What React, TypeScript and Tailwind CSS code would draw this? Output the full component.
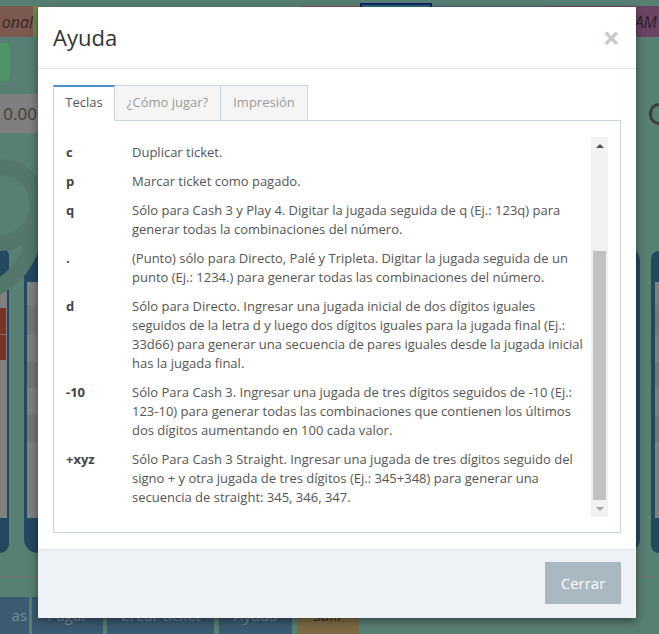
import React from "react";

// Help rows shown in the "Teclas" tab
const rows: { key: string; text: string }[] = [
    { key: "c", text: "Duplicar ticket." },
    { key: "p", text: "Marcar ticket como pagado." },
    { key: "q", text: "Sólo para Cash 3 y Play 4. Digitar la jugada seguida de q (Ej.: 123q) para generar todas la combinaciones del número." },
    { key: ".", text: "(Punto) sólo para Directo, Palé y Tripleta. Digitar la jugada seguida de un punto (Ej.: 1234.) para generar todas las combinaciones del número." },
    { key: "d", text: "Sólo para Directo. Ingresar una jugada inicial de dos dígitos iguales seguidos de la letra d y luego dos dígitos iguales para la jugada final (Ej.: 33d66) para generar una secuencia de pares iguales desde la jugada inicial has la jugada final." },
    { key: "-10", text: "Sólo Para Cash 3. Ingresar una jugada de tres dígitos seguidos de -10 (Ej.: 123-10) para generar todas las combinaciones que contienen los últimos dos dígitos aumentando en 100 cada valor." },
    { key: "+xyz", text: "Sólo Para Cash 3 Straight. Ingresar una jugada de tres dígitos seguido del signo + y otra jugada de tres dígitos (Ej.: 345+348) para generar una secuencia de straight: 345, 346, 347." },
];

// Striped cells inside the background columns
const Stripes: React.FC<{ red?: boolean }> = ({ red }) => (
    <div className="flex h-full flex-col bg-[#808080]">
        {red ? (
            <>
                <div className="h-[26px]" />
                <div className="h-[27px] w-[6px] border-b border-[#8a6a66] bg-[#7a3328]" />
                <div className="h-[25px] w-[6px] bg-[#7a3328]" />
            </>
        ) : (
            <>
                <div className="h-[23px]" />
                <div className="h-[30px] bg-[#767676]" />
                <div className="h-[27px]" />
                <div className="h-[26px] bg-[#767676]" />
                <div className="h-[27px]" />
                <div className="h-[27px] bg-[#767676]" />
            </>
        )}
    </div>
);

// Dimmed app behind the dialog
const Background: React.FC = () => (
    <div className="flex h-full flex-col">
        <div className="mt-[6px] flex h-[31px]">
            <div className="flex w-[33px] items-center justify-end bg-[#7c5a52] text-[16px] italic text-[#3b2824]">onal</div>
            <div className="w-[267px] border-l-[4px] border-[#6f8b4a]" />
            <div className="w-[60px] border-t-2 border-[#8a5560]" />
            <div className="-mt-[3px] w-[72px] border-2 border-[#13236b] bg-[#2f6e70]" />
            <div className="w-[113px] border-t-2 border-[#5e5a86]" />
            <div className="flex flex-1 items-center justify-end bg-[#6b4464] pr-[2px] text-[16px] italic text-[#2e1f2c]">AM</div>
        </div>
        <div className="mt-[6px] h-[38px] w-[10px] rounded-r-[5px] bg-[#4f9468]" />
        <div className="mt-[13px] flex h-[39px] items-center justify-between">
            <div className="flex h-full w-[38px] items-center justify-end overflow-hidden bg-[#7f7f7f] pr-[1px] text-[17px] text-[#3e3e3e]">0.00</div>
            <div className="flex items-center gap-[13px] text-[#333]">
                <span className="text-[14px]">.</span>
                <div className="h-[22px] w-[10px] rounded-l-full border-[3px] border-r-0 border-[#3d3d3d]" />
            </div>
        </div>
        <div className="mt-[114px] flex h-[306px] justify-between">
            <div className="flex">
                <div className="w-[9px] rounded-r-[14px] bg-[#23485f] pb-[35px] pr-[2px] pt-[35px]">
                    <Stripes red />
                </div>
                <div className="ml-[15px] w-[40px] rounded-l-[14px] bg-[#23485f] pb-[35px] pl-[3px] pt-[35px]">
                    <Stripes />
                </div>
            </div>
            <div className="flex gap-[11px]">
                <div className="w-[24px] rounded-r-[14px] bg-[#23485f]" />
                <div className="mt-[4px] w-[8px] rounded-l-[14px] bg-[#23485f] pb-[35px] pl-[4px] pt-[31px]">
                    <Stripes />
                </div>
            </div>
        </div>
        <div className="mt-[23px] h-px bg-[#7a6f70]" />
        <div className="mt-auto flex h-[37px] text-[15px] text-[#7b8d99]">
            <div className="flex w-[29px] items-center justify-end bg-[#3b5b72] pr-[2px]">as</div>
            <div className="ml-[3px] flex w-[71px] items-center justify-center bg-[#3b5b72]">Pagar</div>
            <div className="ml-[4px] flex w-[107px] items-center justify-center bg-[#3b5b72]">Crear ticket</div>
            <div className="ml-[5px] flex w-[73px] items-center justify-center bg-[#3b5b72]">Ayuda</div>
            <div className="ml-[5px] flex w-[62px] items-center justify-center bg-[#7e6b45] text-[#3a301f]">Salir</div>
        </div>
    </div>
);

// Fake classic scrollbar (scrolled to bottom)
const ScrollBar: React.FC = () => (
    <div className="flex w-[17px] flex-col bg-[#f1f1f1]">
        <div className="flex h-[17px] items-center justify-center">
            <div className="h-0 w-0 border-x-[4px] border-b-[4px] border-x-transparent border-b-[#505050]" />
        </div>
        <div className="flex flex-1 flex-col justify-end px-[2px]">
            <div className="h-[249px] bg-[#c1c1c1]" />
        </div>
        <div className="flex h-[17px] items-center justify-center">
            <div className="h-0 w-0 border-x-[4px] border-t-[4px] border-x-transparent border-t-[#a3a3a3]" />
        </div>
    </div>
);

export default function App() {
    return (
        <div className="relative h-[634px] w-[659px] overflow-hidden bg-[#587f74] font-['Open_Sans',sans-serif]">
            <Background />
            <svg className="absolute left-[-40px] top-[150px]" width="90" height="150" viewBox="0 0 90 150">
                <circle cx="40" cy="55" r="38" fill="none" stroke="#53776b" strokeWidth="16" />
                <path d="M78 55 C78 100 60 130 30 140" fill="none" stroke="#53776b" strokeWidth="16" />
            </svg>

            {/* Dialog */}
            <div className="absolute left-[38px] top-[7px] flex h-[611px] w-[598px] flex-col bg-white shadow-[0_3px_9px_rgba(0,0,0,0.45)]">
                <div className="flex h-[62px] items-center justify-between border-b border-[#e5e5e5] px-[15px]">
                    <h4 className="text-[22px] font-normal text-[#333]">Ayuda</h4>
                    <span className="mr-[1px] text-[30px] font-bold leading-none text-[#c8c8c8]">×</span>
                </div>

                <div className="flex-1 px-[15px] pt-[16px]">
                    <div className="relative z-10 -mb-px flex h-[36px] text-[13px]">
                        <div className="flex w-[62px] items-center justify-center border border-t-2 border-[#cad4df] border-b-white border-t-[#4a8fce] bg-white pb-[1px] text-[#555]">Teclas</div>
                        <div className="flex w-[106px] items-center justify-center border border-l-0 border-[#cad4df] bg-[#f5f5f5] text-[#999]">¿Cómo jugar?</div>
                        <div className="flex w-[87px] items-center justify-center border border-l-0 border-[#cad4df] bg-[#f5f5f5] text-[#999]">Impresión</div>
                    </div>
                    <div className="flex h-[413px] border border-[#cad4df] pb-[15px] pl-[12px] pr-[12px] pt-[16px]">
                        <div className="flex-1 overflow-hidden pt-[6px] text-[13px] leading-[19px] text-[#555]">
                            {rows.map((row) => (
                                <div key={row.key} className="mb-[10px] flex">
                                    <div className="w-[66px] shrink-0 font-bold text-[#444]">{row.key}</div>
                                    <div className="flex-1 pr-[4px]">{row.text}</div>
                                </div>
                            ))}
                        </div>
                        <ScrollBar />
                    </div>
                </div>

                <div className="flex h-[69px] justify-end border-t border-[#e1e6ec] bg-[#eef2f6] pr-[15px] pt-[12px]">
                    <button className="h-[42px] w-[76px] bg-[#aab8c2] text-[15px] text-white">Cerrar</button>
                </div>
            </div>
        </div>
    );
}
